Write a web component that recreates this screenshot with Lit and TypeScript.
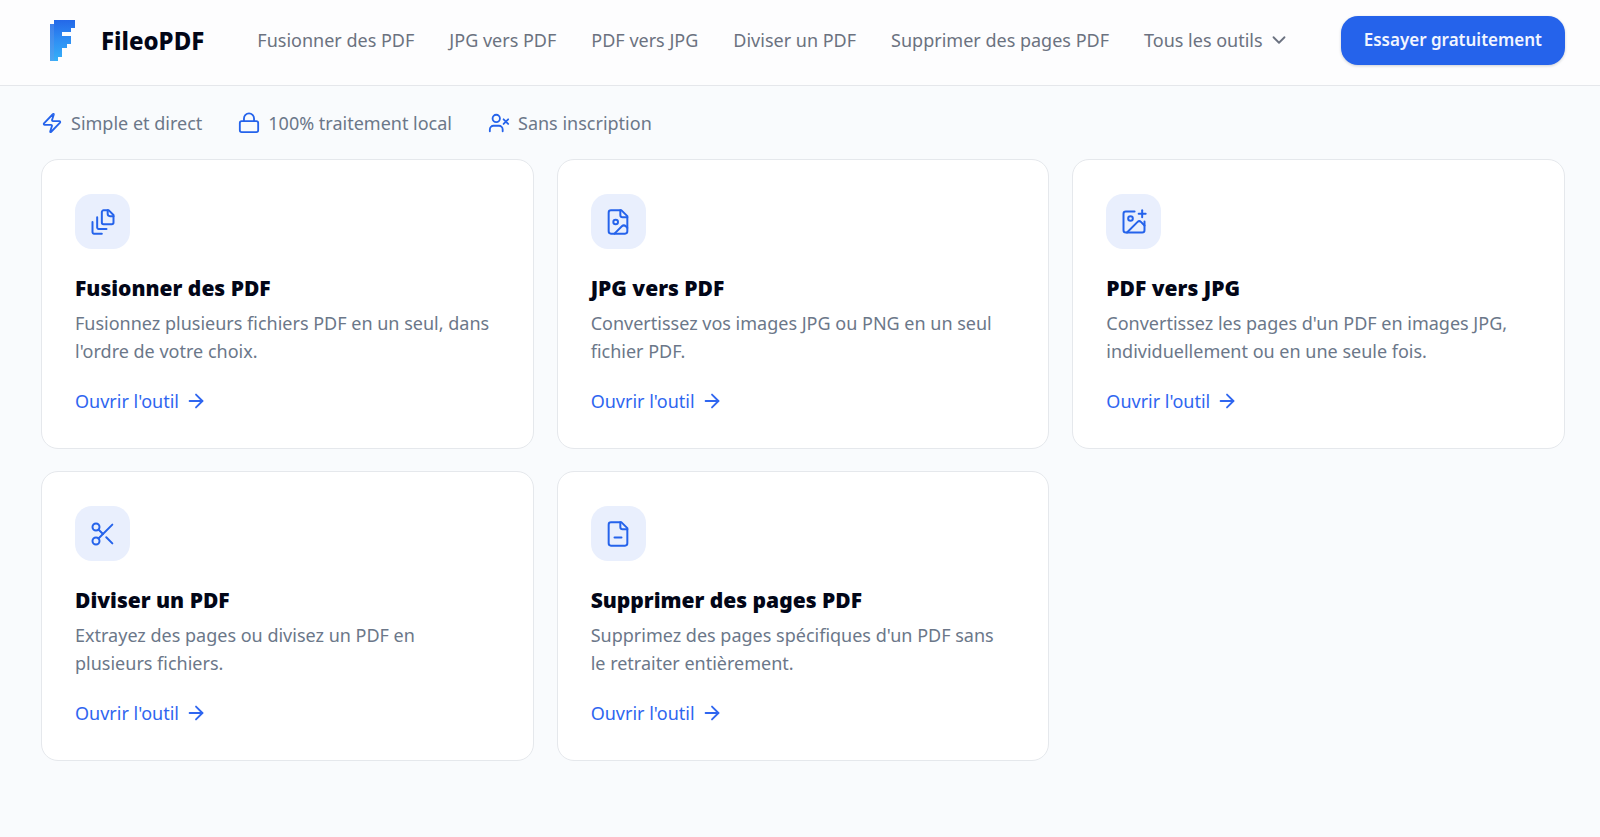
import { LitElement, html, css, svg, SVGTemplateResult } from "lit";
import { customElement, property } from "lit/decorators.js";

const icons: Record<string, SVGTemplateResult> = {
  zap: svg`<path d="M4 14a1 1 0 0 1-.78-1.63l9.9-10.2a.5.5 0 0 1 .86.46l-1.92 6.02A1 1 0 0 0 13 10h7a1 1 0 0 1 .78 1.63l-9.9 10.2a.5.5 0 0 1-.86-.46l1.92-6.02A1 1 0 0 0 11 14z"/>`,
  lock: svg`<rect width="20" height="12" x="2" y="10" rx="2"/><path d="M6.500 10V7a5.500 5.500 0 0 1 11 0v3"/>`,
  userX: svg`<path d="M16 21v-2a4 4 0 0 0-4-4H6a4 4 0 0 0-4 4v2"/><circle cx="9" cy="7" r="4"/><path d="m17 8 5 5m0-5-5 5"/>`,
  fileStack: svg`<path d="M21 7h-3a2 2 0 0 1-2-2V2"/><path d="M21 6v6.500c0 .8-.7 1.500-1.500 1.500h-7c-.8 0-1.500-.7-1.500-1.500v-9c0-.8.7-1.500 1.500-1.500H17Z"/><path d="M7 8v8.800c0 .3.2.6.4.8.2.2.5.4.8.4H15"/><path d="M3 12v8.800c0 .3.2.6.4.8.2.2.5.4.8.4H11"/>`,
  fileImage: svg`<path d="M15 2H6a2 2 0 0 0-2 2v16a2 2 0 0 0 2 2h12a2 2 0 0 0 2-2V7Z"/><path d="M14 2v4a2 2 0 0 0 2 2h4"/><circle cx="10" cy="12" r="2"/><path d="m20 17-1.296-1.296a2.410 2.410 0 0 0-3.408 0L9 22"/>`,
  imagePlus: svg`<path d="M16 5h6"/><path d="M19 2v6"/><path d="M21 11.500V19a2 2 0 0 1-2 2H5a2 2 0 0 1-2-2V5a2 2 0 0 1 2-2h7.500"/><path d="m21 15-3.086-3.086a2 2 0 0 0-2.828 0L6 21"/><circle cx="9" cy="9" r="2"/>`,
  scissors: svg`<circle cx="6" cy="6" r="3"/><path d="M8.120 8.120 12 12"/><path d="M20 4 8.120 15.880"/><circle cx="6" cy="18" r="3"/><path d="M14.800 14.800 20 20"/>`,
  fileMinus: svg`<path d="M15 2H6a2 2 0 0 0-2 2v16a2 2 0 0 0 2 2h12a2 2 0 0 0 2-2V7Z"/><path d="M14 2v4a2 2 0 0 0 2 2h4"/><path d="M9 15h6"/>`,
  arrow: svg`<path d="M5 12h14"/><path d="m12 5 7 7-7 7"/>`,
  chevron: svg`<path d="m6 9 6 6 6-6"/>`,
};

const icon = (name: string) => html`<svg viewBox="0 0 24 24" aria-hidden="true">${icons[name]}</svg>`;

const iconStyles = css`
  svg {
    display: block;
    flex: none;
    fill: none;
    stroke: currentColor;
    stroke-width: 2;
    stroke-linecap: round;
    stroke-linejoin: round;
  }
`;

interface Tool {
  icon: string;
  title: string;
  text: string;
}

const tools: Tool[] = [
  { icon: "fileStack", title: "Fusionner des PDF", text: "Fusionnez plusieurs fichiers PDF en un seul, dans l'ordre de votre choix." },
  { icon: "fileImage", title: "JPG vers PDF", text: "Convertissez vos images JPG ou PNG en un seul fichier PDF." },
  { icon: "imagePlus", title: "PDF vers JPG", text: "Convertissez les pages d'un PDF en images JPG, individuellement ou en une seule fois." },
  { icon: "scissors", title: "Diviser un PDF", text: "Extrayez des pages ou divisez un PDF en plusieurs fichiers." },
  { icon: "fileMinus", title: "Supprimer des pages PDF", text: "Supprimez des pages spécifiques d'un PDF sans le retraiter entièrement." },
];

@customElement("tool-card")
export class ToolCard extends LitElement {
  @property({ attribute: false }) tool!: Tool;

  static styles = [
    iconStyles,
    css`
      :host {
        display: block;
        box-sizing: border-box;
        padding: 34px 33px 33px;
        border: 1px solid #e5e8ec;
        border-radius: 17px;
        background: #fff;
      }
      .tile {
        display: grid;
        place-items: center;
        width: 55px;
        height: 55px;
        border-radius: 17px;
        background: #e9effd;
        color: #2563eb;
      }
      .tile svg {
        width: 28px;
        height: 28px;
        stroke-width: 1.7;
      }
      .title {
        margin: 25px 0 7px;
        font-size: 21px;
        line-height: 28px;
        font-weight: 900;
        color: #020617;
      }
      .text {
        margin: 0;
        padding-right: 6px;
        font-size: 18px;
        line-height: 28px;
        color: #6b7789;
      }
      .open {
        display: inline-flex;
        align-items: center;
        gap: 6px;
        margin-top: 22px;
        font-size: 18px;
        line-height: 28px;
        color: #2f66f0;
        text-decoration: none;
      }
      .open svg {
        width: 22px;
        height: 22px;
      }
    `,
  ];

  render() {
    return html`
      <div class="tile">${icon(this.tool.icon)}</div>
      <h2 class="title">${this.tool.title}</h2>
      <p class="text">${this.tool.text}</p>
      <a class="open" href="#">Ouvrir l'outil ${icon("arrow")}</a>
    `;
  }
}

@customElement("app-root")
export class AppRoot extends LitElement {
  static styles = [
    iconStyles,
    css`
      :host {
        display: block;
        min-height: 100vh;
        background: #f9fbfd;
        font-family: "Noto Sans", "Open Sans", sans-serif;
        font-size: 18px;
        line-height: 28px;
        color: #6b7280;
      }
      .header {
        display: flex;
        align-items: center;
        box-sizing: border-box;
        height: 86px;
        padding: 0 35px 4px 50px;
        border-bottom: 1px solid #e5e7eb;
        background: #fdfdfe;
      }
      .brand {
        display: flex;
        align-items: center;
        gap: 26px;
        color: #020617;
        font-size: 24px;
        font-weight: 800;
        text-decoration: none;
      }
      .logo {
        width: 25px;
        height: 41px;
        stroke: none;
      }
      .nav {
        display: flex;
        align-items: center;
        gap: 35px;
        margin-left: 53px;
        padding-bottom: 2px;
        white-space: nowrap;
      }
      .link {
        color: inherit;
        text-decoration: none;
      }
      .more {
        display: flex;
        align-items: center;
        gap: 5px;
        padding: 0;
        border: 0;
        background: none;
        color: inherit;
        font: inherit;
      }
      .more svg {
        width: 22px;
        height: 22px;
      }
      .cta {
        margin-left: auto;
        padding: 10px 23px 11px;
        border: 0;
        border-radius: 17px;
        background: #2563eb;
        box-shadow: 0 1px 3px rgb(15 23 42 / 20%);
        color: #f1f5ff;
        font: inherit;
        font-size: 17px;
        font-weight: 600;
        white-space: nowrap;
      }
      .main {
        padding: 23px 35px 60px 41px;
      }
      .perks {
        display: flex;
        gap: 36px;
        margin: 0 0 22px;
        padding: 0;
        list-style: none;
        color: #6b7789;
      }
      .perk {
        display: flex;
        align-items: center;
        gap: 8px;
      }
      .perk svg {
        width: 22px;
        height: 22px;
        color: #2563eb;
      }
      .grid {
        display: grid;
        grid-template-columns: repeat(3, minmax(0, 1fr));
        gap: 22px 23px;
      }
    `,
  ];

  render() {
    return html`
      <header class="header">
        <a class="brand" href="#">
          <svg class="logo" viewBox="0 0 25 41" aria-hidden="true">
            <defs>
              <linearGradient id="face" x1="0" y1="0" x2="0" y2="1">
                <stop offset="0" stop-color="#2468e8" />
                <stop offset="0.5" stop-color="#2f8ff4" />
                <stop offset="1" stop-color="#35b0f8" />
              </linearGradient>
              <linearGradient id="side" x1="0" y1="0" x2="0" y2="1">
                <stop offset="0" stop-color="#3f80ea" />
                <stop offset="1" stop-color="#4ba6f2" />
              </linearGradient>
            </defs>
            <path fill="url(#face)" d="M4 0h21v8h-4v4h-9v4h9v8h-4v4h-5v9H8v4H4z" />
            <path fill="url(#side)" d="M0 4h4v37H0z" />
          </svg>
          <span>FileoPDF</span>
        </a>
        <nav class="nav">
          ${tools.map((t) => html`<a class="link" href="#">${t.title}</a>`)}
          <button class="more" type="button">Tous les outils ${icon("chevron")}</button>
        </nav>
        <button class="cta" type="button">Essayer gratuitement</button>
      </header>
      <main class="main">
        <ul class="perks">
          <li class="perk">${icon("zap")} Simple et direct</li>
          <li class="perk">${icon("lock")} 100% traitement local</li>
          <li class="perk">${icon("userX")} Sans inscription</li>
        </ul>
        <div class="grid">${tools.map((t) => html`<tool-card .tool=${t}></tool-card>`)}</div>
      </main>
    `;
  }
}
